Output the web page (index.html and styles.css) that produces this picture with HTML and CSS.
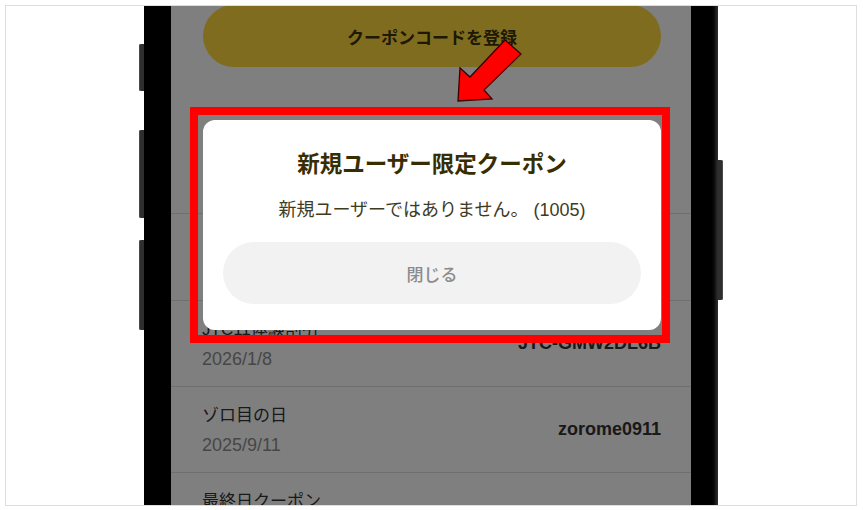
FILE: index.html
```html
<!DOCTYPE html>
<html lang="ja">
<head>
<meta charset="utf-8">
<title>クーポン</title>
<link rel="stylesheet" href="styles.css">
</head>
<body>
<div class="frame">
  <div class="device">
    <div class="side side-left">
      <span class="hw b1"></span>
      <span class="hw b2"></span>
      <span class="hw b3"></span>
    </div>
    <div class="bezel">
      <div class="screen">
        <div class="code-btn">クーポンコードを登録</div>
        <div class="spacer"></div>
        <ul class="list">
          <li class="item item-hidden"></li>
          <li class="item item-hidden"></li>
          <li class="item">
            <div class="info"><div class="name">JTC11体験割引</div><div class="date">2026/1/8</div></div>
            <div class="code">JTC-GMW2DL6B</div>
          </li>
          <li class="item">
            <div class="info"><div class="name">ゾロ目の日</div><div class="date">2025/9/11</div></div>
            <div class="code">zorome0911</div>
          </li>
          <li class="item">
            <div class="info"><div class="name">最終日クーポン</div><div class="date">2025/8/31</div></div>
            <div class="code">lastday0831</div>
          </li>
        </ul>
        <div class="scrim"></div>
        <div class="dialog">
          <h2 class="dlg-title">新規ユーザー限定クーポン</h2>
          <p class="dlg-msg">新規ユーザーではありません。 (1005)</p>
          <button class="dlg-btn" type="button">閉じる</button>
        </div>
      </div>
    </div>
    <div class="side side-right">
      <span class="hw b4"></span>
    </div>
  </div>
  <svg class="annot" width="850" height="499" viewBox="6 6 850 499" xmlns="http://www.w3.org/2000/svg">
    <rect x="194" y="111" width="472" height="228" fill="none" stroke="#ff0000" stroke-width="8"/>
    <polygon points="505,40 521,54 484,90 492,99 458,101 460,68 470,77" fill="#ff0000" stroke="#3a0000" stroke-width="1.3" stroke-linejoin="miter"/>
  </svg>
</div>
</body>
</html>
```

FILE: styles.css
```css
html, body {
  margin: 0;
  padding: 0;
}

body {
  width: 863px;
  height: 510px;
  background: #ffffff;
  font-family: "Liberation Sans", "Noto Sans CJK JP", sans-serif;
  overflow: hidden;
}

.frame {
  position: relative;
  margin: 5px 6px 4px 5px;
  height: 501px;
  box-sizing: border-box;
  border: 1px solid #dedede;
  overflow: hidden;
  display: flex;
  justify-content: center;
  background: #ffffff;
}

.device {
  display: flex;
  height: 100%;
}

.side {
  width: 5px;
  display: flex;
  flex-direction: column;
}

.hw {
  display: block;
  width: 5px;
  background: #2e2e2e;
}

.side-left .hw {
  border-radius: 2px 0 0 2px;
  box-shadow: inset 1px 0 0 #4a4a4a;
}

.side-right .hw {
  border-radius: 0 2px 2px 0;
  box-shadow: inset -1px 0 0 #4a4a4a;
}

.b1 { margin-top: 38px; height: 47px; }
.b2 { margin-top: 39px; height: 88px; }
.b3 { margin-top: 22px; height: 90px; }
.b4 { margin-top: 154px; height: 140px; }

.bezel {
  width: 574px;
  box-sizing: border-box;
  padding: 0 27px;
  background: #000000;
  box-shadow: inset -5px 0 4px -3px #3a3a3a;
}

.screen {
  position: relative;
  width: 520px;
  height: 100%;
  background: #ffffff;
  overflow: hidden;
}

.code-btn {
  margin: -1px 30px 0 32px;
  height: 62px;
  border-radius: 31px;
  background: #fed93c;
  display: flex;
  align-items: center;
  justify-content: center;
  font-family: "Noto Sans CJK JP", sans-serif;
  font-weight: 700;
  font-size: 17px;
  color: #3a3208;
}

.spacer {
  height: 60px;
}

.list {
  list-style: none;
  margin: 0;
  padding: 0;
}

.item {
  height: 86px;
  box-sizing: border-box;
  border-bottom: 1px solid #dedede;
  padding: 0 30px 0 31px;
  display: flex;
  justify-content: space-between;
  align-items: center;
}

.item-hidden {
  height: 87px;
}

.info {
  align-self: flex-start;
  padding-top: 17px;
}

.name {
  font-size: 17px;
  line-height: 24px;
  color: #333333;
}

.date {
  margin-top: 5px;
  font-size: 18px;
  line-height: 24px;
  color: #8e8e8e;
}

.code {
  font-size: 18px;
  font-weight: 700;
  color: #333333;
}

.scrim {
  position: absolute;
  inset: 0;
  background: rgba(0, 0, 0, 0.5);
}

.dialog {
  position: absolute;
  left: 32px;
  top: 114px;
  width: 458px;
  height: 210px;
  box-sizing: border-box;
  padding: 28px 20px 26px 20px;
  background: #ffffff;
  border-radius: 12px;
  display: flex;
  flex-direction: column;
  align-items: stretch;
  text-align: center;
}

.dlg-title {
  margin: 0;
  font-family: "Noto Sans CJK JP", sans-serif;
  font-size: 22.5px;
  line-height: 28px;
  font-weight: 700;
  color: #362e02;
}

.dlg-msg {
  margin: 21px 0 0;
  font-size: 18px;
  line-height: 26px;
  color: #3f3b1f;
}

.dlg-btn {
  margin-top: 19px;
  height: 62px;
  border: none;
  border-radius: 31px;
  background: #f2f2f2;
  font-family: "Noto Sans CJK JP", sans-serif;
  font-size: 17px;
  font-weight: 500;
  color: #8b8b8b;
  padding: 0;
}

.annot {
  position: absolute;
  left: 0;
  top: 0;
  pointer-events: none;
}
```
